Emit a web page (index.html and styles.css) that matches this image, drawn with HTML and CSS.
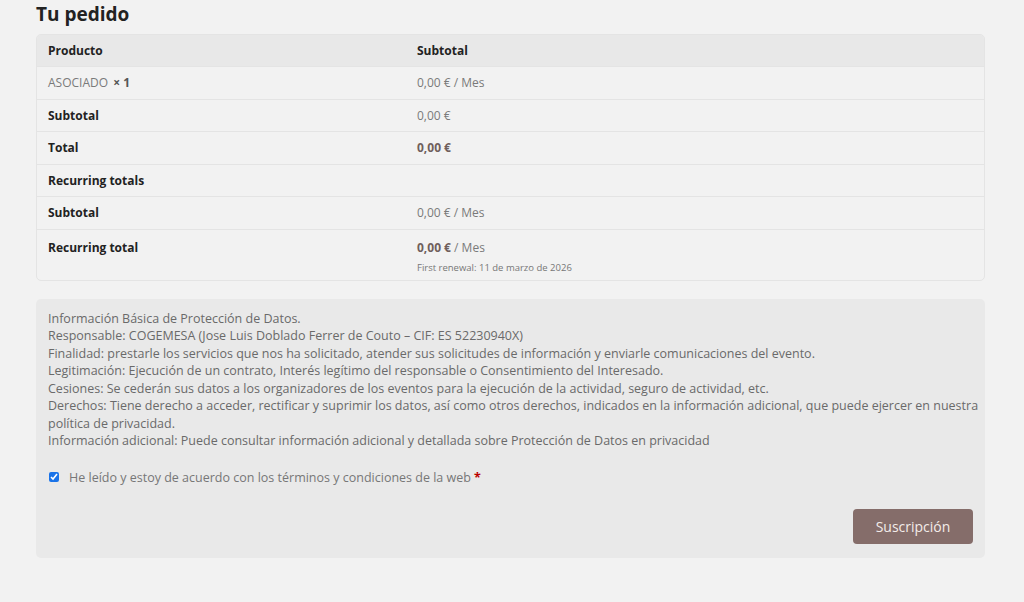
FILE: index.html
```html
<!DOCTYPE html>
<html lang="es">
<head>
    <meta charset="UTF-8">
    <title>Tu pedido</title>
    <link rel="stylesheet" href="styles.css">
</head>
<body>
    <div class="checkout">
        <h3 class="order-title">Tu pedido</h3>
        <div class="order-review">
            <table class="order-table">
                <thead>
                    <tr>
                        <th class="col-name">Producto</th>
                        <th class="col-total">Subtotal</th>
                    </tr>
                </thead>
                <tbody>
                    <tr class="cart-item">
                        <td>ASOCIADO <strong class="qty">&times;&nbsp;1</strong></td>
                        <td>0,00 € / Mes</td>
                    </tr>
                    <tr>
                        <th>Subtotal</th>
                        <td>0,00 €</td>
                    </tr>
                    <tr>
                        <th>Total</th>
                        <td><strong class="amount">0,00 €</strong></td>
                    </tr>
                    <tr>
                        <th colspan="2">Recurring totals</th>
                    </tr>
                    <tr>
                        <th>Subtotal</th>
                        <td>0,00 € / Mes</td>
                    </tr>
                    <tr class="recurring-total">
                        <th>Recurring total</th>
                        <td>
                            <strong class="amount">0,00 €</strong> / Mes
                            <div class="renewal">First renewal: 11 de marzo de 2026</div>
                        </td>
                    </tr>
                </tbody>
            </table>
        </div>

        <div class="payment-box">
            <p class="privacy-text">
                Información Básica de Protección de Datos.<br>
                Responsable: COGEMESA (Jose Luis Doblado Ferrer de Couto – CIF: ES 52230940X)<br>
                Finalidad: prestarle los servicios que nos ha solicitado, atender sus solicitudes de información y enviarle comunicaciones del evento.<br>
                Legitimación: Ejecución de un contrato, Interés legítimo del responsable o Consentimiento del Interesado.<br>
                Cesiones: Se cederán sus datos a los organizadores de los eventos para la ejecución de la actividad, seguro de actividad, etc.<br>
                Derechos: Tiene derecho a acceder, rectificar y suprimir los datos, así como otros derechos, indicados en la información adicional, que puede ejercer en nuestra política de privacidad.<br>
                Información adicional: Puede consultar información adicional y detallada sobre Protección de Datos en privacidad
            </p>
            <label class="terms">
                <input type="checkbox" checked>
                <span>He leído y estoy de acuerdo con los términos y condiciones de la web</span>
                <abbr class="required">*</abbr>
            </label>
            <div class="place-order">
                <button class="btn-order">Suscripción</button>
            </div>
        </div>
    </div>
</body>
</html>
```

FILE: styles.css
```css
body {
    margin: 0;
    background: #f2f2f2;
    font-family: "Open Sans", Arial, sans-serif;
    color: #666;
}

.checkout {
    padding: 0 39px 0 36px;
}

.order-title {
    margin: 0;
    padding-top: 1px;
    height: 33px;
    font-size: 19px;
    font-weight: 700;
    color: #222;
}

.order-review {
    border: 1px solid #e4e4e4;
    border-radius: 5px;
    overflow: hidden;
}

.order-table {
    width: 100%;
    border-collapse: collapse;
    font-size: 12px;
}

.order-table th,
.order-table td {
    text-align: left;
    padding: 0 11px;
    height: 31.5px;
    border-top: 1px solid #e4e4e4;
    vertical-align: middle;
}

.order-table thead th {
    background: #e8e8e8;
    border-top: none;
    height: 31px;
}

.order-table th {
    color: #222;
    font-weight: 700;
}

.order-table td {
    color: #7a7a7a;
}

.order-table .col-name {
    width: 347px;
}

.qty {
    color: #555;
    margin-left: 2px;
}

.amount {
    color: #6f5f5c;
}

.recurring-total th,
.recurring-total td {
    vertical-align: top;
    padding-top: 9px;
    height: 41px;
}

.renewal {
    font-size: 9.5px;
    margin-top: 5px;
    color: #777;
}

.payment-box {
    margin-top: 18px;
    background: #e9e9e9;
    border-radius: 5px;
    padding: 11px 6px 14px 12px;
}

.privacy-text {
    margin: 0;
    font-size: 12.5px;
    line-height: 17.5px;
    color: #6a6a6a;
}

.terms {
    display: flex;
    align-items: center;
    margin-top: 19px;
    font-size: 12.5px;
    color: #777;
}

.terms input {
    width: 10px;
    height: 10px;
    margin: 0 10px 0 1px;
    accent-color: #1a73e8;
}

.required {
    color: #b00;
    text-decoration: none;
    font-weight: 700;
    margin-left: 3px;
}

.place-order {
    display: flex;
    justify-content: flex-end;
    margin-top: 23px;
    padding-right: 6px;
}

.btn-order {
    background: #856d6a;
    color: #f3ece9;
    border: none;
    border-radius: 4px;
    font-family: inherit;
    font-size: 14px;
    width: 120px;
    height: 35px;
    cursor: pointer;
}
```
